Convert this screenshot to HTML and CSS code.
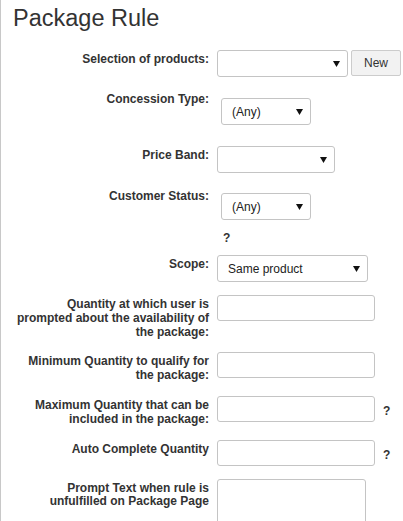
FILE: index.html
```html
<!DOCTYPE html>
<html>
<head>
<meta charset="utf-8">
<title>Package Rule</title>
<link rel="stylesheet" href="styles.css">
</head>
<body>
<div class="page">
  <h1 class="title">Package Rule</h1>
  <div class="form">
    <div class="row">
      <div class="label">Selection of products:</div>
      <div class="field inline">
        <div class="select w131"><span class="value"></span><svg class="arrow" width="7" height="6" viewBox="0 0 7 6"><polygon points="0,0 7,0 3.5,6"/></svg></div>
        <button class="btn">New</button>
      </div>
    </div>
    <div class="row">
      <div class="label">Concession Type:</div>
      <div class="field wrap">
        <div class="select w90"><span class="value">(Any)</span><svg class="arrow" width="7" height="6" viewBox="0 0 7 6"><polygon points="0,0 7,0 3.5,6"/></svg></div>
      </div>
    </div>
    <div class="row">
      <div class="label">Price Band:</div>
      <div class="field">
        <div class="select w118"><span class="value"></span><svg class="arrow" width="7" height="6" viewBox="0 0 7 6"><polygon points="0,0 7,0 3.5,6"/></svg></div>
      </div>
    </div>
    <div class="row row-status">
      <div class="label">Customer Status:</div>
      <div class="field">
        <div class="wrap wrap-top">
          <div class="select w90"><span class="value">(Any)</span><svg class="arrow" width="7" height="6" viewBox="0 0 7 6"><polygon points="0,0 7,0 3.5,6"/></svg></div>
        </div>
        <div class="help help-below">?</div>
      </div>
    </div>
    <div class="row">
      <div class="label">Scope:</div>
      <div class="field">
        <div class="select w151"><span class="value">Same product</span><svg class="arrow" width="7" height="6" viewBox="0 0 7 6"><polygon points="0,0 7,0 3.5,6"/></svg></div>
      </div>
    </div>
    <div class="row">
      <div class="label">Quantity at which user is prompted about the availability of the package:</div>
      <div class="field"><input class="input" type="text"></div>
    </div>
    <div class="row">
      <div class="label">Minimum Quantity to qualify for the package:</div>
      <div class="field"><input class="input" type="text"></div>
    </div>
    <div class="row">
      <div class="label">Maximum Quantity that can be included in the package:</div>
      <div class="field inline"><input class="input" type="text"><span class="help help-inline">?</span></div>
    </div>
    <div class="row">
      <div class="label">Auto Complete Quantity</div>
      <div class="field inline"><input class="input" type="text"><span class="help help-inline">?</span></div>
    </div>
    <div class="row">
      <div class="label">Prompt Text when rule is unfulfilled on Package Page</div>
      <div class="field"><textarea class="textarea"></textarea></div>
    </div>
  </div>
</div>
</body>
</html>
```

FILE: styles.css
```css
html, body {
  margin: 0;
  padding: 0;
  background: #ffffff;
}

body {
  font-family: "Liberation Sans", Arial, sans-serif;
  color: #333333;
  height: 521px;
  overflow: hidden;
}

.page {
  border-left: 1px solid #c8c8c8;
  min-height: 521px;
  padding-left: 12px;
  box-sizing: border-box;
}

.title {
  margin: 0;
  padding-top: 4px;
  font-size: 23.5px;
  line-height: 28px;
  font-weight: normal;
  color: #333333;
}

.form {
  display: flex;
  flex-direction: column;
  gap: 13px;
  margin-top: 18px;
}

.row {
  display: flex;
  align-items: flex-start;
}

.label {
  flex: none;
  width: 196px;
  margin-right: 8px;
  padding-top: 3px;
  text-align: right;
  font-size: 12px;
  font-weight: bold;
  line-height: 13.8px;
  color: #333333;
}

.field {
  display: flex;
  flex-direction: column;
  align-items: flex-start;
}

.field.inline {
  flex-direction: row;
  align-items: flex-start;
}

.wrap {
  padding: 8px 4px 8px 4px;
}

.wrap-top {
  padding: 7px 4px 0 4px;
}

.row-status .label {
  padding-top: 4px;
}

.select {
  box-sizing: border-box;
  height: 27px;
  border: 1px solid #c4c4c4;
  border-radius: 3px;
  background: #ffffff;
  display: flex;
  align-items: center;
  justify-content: space-between;
  padding: 0 7px 0 10px;
  font-size: 12px;
  color: #222222;
}

.value {
  white-space: nowrap;
}

.arrow {
  display: block;
  fill: #111111;
}

.w131 { width: 131px; }
.w90 { width: 90px; }
.w118 { width: 118px; }
.w151 { width: 151px; }

.btn {
  box-sizing: border-box;
  margin-left: 3px;
  width: 50px;
  height: 26px;
  border: 1px solid #cccccc;
  border-radius: 2px;
  background: #f2f2f2;
  font-family: "Liberation Sans", Arial, sans-serif;
  font-size: 12px;
  color: #333333;
  padding: 0;
}

.input {
  box-sizing: border-box;
  width: 158px;
  height: 26px;
  margin: 0;
  border: 1px solid #c4c4c4;
  border-radius: 3px;
  background: #ffffff;
  padding: 0 6px;
}

.textarea {
  box-sizing: border-box;
  width: 149px;
  height: 70px;
  margin: 0;
  border: 1px solid #c4c4c4;
  border-radius: 3px;
  resize: none;
  padding: 4px;
}

.help {
  font-size: 12px;
  font-weight: bold;
  color: #333333;
}

.help-below {
  margin-top: 14px;
  margin-left: 6px;
  line-height: 8px;
}

.help-inline {
  margin-left: 8px;
  padding-top: 8px;
  line-height: 14px;
}
```
